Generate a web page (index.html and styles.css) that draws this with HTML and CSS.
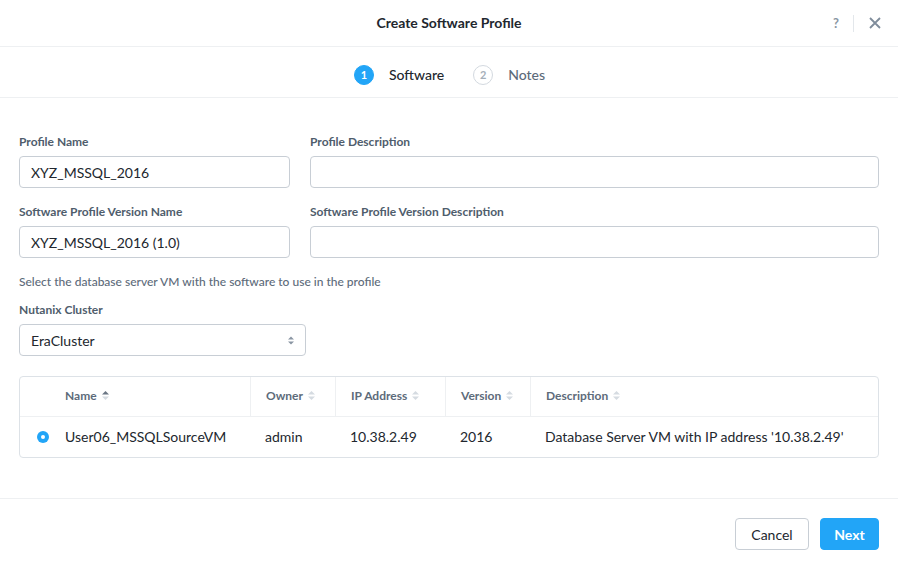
FILE: index.html
```html
<!DOCTYPE html>
<html>
<head>
<meta charset="utf-8">
<link rel="stylesheet" href="styles.css">
</head>
<body>
<div class="modal">
  <header class="head">
    <div class="title">Create Software Profile</div>
    <div class="head-actions">
      <span class="help">?</span>
      <span class="sep"></span>
      <svg class="close" width="12" height="12" viewBox="0 0 12 12"><path d="M1 1L11 11M11 1L1 11" stroke="#7f8c9b" stroke-width="1.8" fill="none"/></svg>
    </div>
  </header>
  <nav class="steps">
    <div class="step active"><span class="num">1</span><span class="step-label">Software</span></div>
    <div class="step"><span class="num">2</span><span class="step-label">Notes</span></div>
  </nav>
  <main class="body">
    <div class="grid">
      <div class="field">
        <label class="lbl">Profile Name</label>
        <div class="input">XYZ_MSSQL_2016</div>
      </div>
      <div class="field">
        <label class="lbl">Profile Description</label>
        <div class="input"></div>
      </div>
      <div class="field">
        <label class="lbl">Software Profile Version Name</label>
        <div class="input">XYZ_MSSQL_2016 (1.0)</div>
      </div>
      <div class="field">
        <label class="lbl">Software Profile Version Description</label>
        <div class="input"></div>
      </div>
    </div>
    <p class="hint">Select the database server VM with the software to use in the profile</p>
    <div class="field cluster">
      <label class="lbl">Nutanix Cluster</label>
      <div class="input select">EraCluster
        <svg class="updown" width="6" height="9" viewBox="0 0 6 9"><path d="M0 3.5L3 0.5L6 3.5Z M0 5.5L3 8.5L6 5.5Z" fill="#8a96a3"/></svg>
      </div>
    </div>
    <div class="table">
      <div class="tr th">
        <div class="c c0"></div>
        <div class="c c1">Name <svg class="sort" width="7" height="11" viewBox="0 0 7 11"><path d="M0 4.5L3.5 1L7 4.5Z" fill="#6b7785"/><path d="M0 6.5L3.5 10L7 6.5Z" fill="#d5dbe1"/></svg></div>
        <div class="c c2">Owner <svg class="sort" width="7" height="11" viewBox="0 0 7 11"><path d="M0 4.5L3.5 1L7 4.5Z" fill="#d5dbe1"/><path d="M0 6.5L3.5 10L7 6.5Z" fill="#d5dbe1"/></svg></div>
        <div class="c c3">IP Address <svg class="sort" width="7" height="11" viewBox="0 0 7 11"><path d="M0 4.5L3.5 1L7 4.5Z" fill="#d5dbe1"/><path d="M0 6.5L3.5 10L7 6.5Z" fill="#d5dbe1"/></svg></div>
        <div class="c c4">Version <svg class="sort" width="7" height="11" viewBox="0 0 7 11"><path d="M0 4.5L3.5 1L7 4.5Z" fill="#d5dbe1"/><path d="M0 6.5L3.5 10L7 6.5Z" fill="#d5dbe1"/></svg></div>
        <div class="c c5">Description <svg class="sort" width="7" height="11" viewBox="0 0 7 11"><path d="M0 4.5L3.5 1L7 4.5Z" fill="#d5dbe1"/><path d="M0 6.5L3.5 10L7 6.5Z" fill="#d5dbe1"/></svg></div>
      </div>
      <div class="tr td">
        <div class="c c0"><span class="radio"></span></div>
        <div class="c c1">User06_MSSQLSourceVM</div>
        <div class="c c2">admin</div>
        <div class="c c3">10.38.2.49</div>
        <div class="c c4">2016</div>
        <div class="c c5">Database Server VM with IP address '10.38.2.49'</div>
      </div>
    </div>
  </main>
  <footer class="foot">
    <button class="btn cancel">Cancel</button>
    <button class="btn next">Next</button>
  </footer>
</div>
</body>
</html>
```
FILE: styles.css
```css
* { box-sizing: border-box; }
html, body { margin: 0; padding: 0; background: #fff; }
body {
  font-family: Lato, "Open Sans", "Liberation Sans", sans-serif;
  color: #22272e;
  width: 898px;
  height: 568px;
  overflow: hidden;
}
.modal { display: flex; flex-direction: column; height: 568px; }
.head {
  height: 47px;
  border-bottom: 1px solid #eef0f2;
  display: flex;
  align-items: center;
  justify-content: center;
  position: relative;
  padding-bottom: 2px;
}
.title { font-size: 14px; font-weight: 700; color: #22272e; }
.head-actions {
  position: absolute;
  right: 17px;
  top: 14px;
  display: flex;
  align-items: center;
  height: 18px;
}
.help { font-size: 13px; color: #8a96a3; font-weight: 700; }
.sep { width: 1px; height: 17px; background: #e3e7eb; margin: 0 15px 0 14px; }
.close { display: block; }
.steps {
  height: 51px;
  border-bottom: 1px solid #eef0f2;
  display: flex;
  align-items: center;
  justify-content: center;
  gap: 29px;
  padding-left: 1px;
  padding-top: 5px;
}
.step { display: flex; align-items: center; }
.num {
  width: 20px; height: 20px;
  border-radius: 50%;
  border: 1px solid #d3d9df;
  color: #a5afb9;
  font-size: 11px;
  font-weight: 700;
  display: flex; align-items: center; justify-content: center;
  margin-right: 15px;
}
.step.active .num { background: #22a5f7; border-color: #22a5f7; color: #fff; }
.step-label { font-size: 14px; color: #5d6b7a; font-weight: 500; }
.step.active .step-label { color: #22272e; }
.body { flex: 1; padding: 37px 19px 0 19px; }
.grid {
  display: grid;
  grid-template-columns: 271px 569px;
  column-gap: 20px;
  row-gap: 17px;
}
.field { display: flex; flex-direction: column; }
.lbl { font-size: 12px; font-weight: 700; color: #4f5d6c; margin-bottom: 7px; line-height: 14px; }
.input {
  height: 32px;
  border: 1px solid #c8ced5;
  border-radius: 4px;
  font-size: 14px;
  color: #22272e;
  padding: 0 11px;
  display: flex;
  align-items: center;
}
.hint { margin: 17px 0 0 0; font-size: 12px; color: #5d6b7a; font-weight: 500; line-height: 14px; }
.cluster { margin-top: 14px; width: 287px; }
.select { justify-content: space-between; }
.table {
  margin-top: 20px;
  border: 1px solid #dde2e7;
  border-radius: 4px;
}
.tr { display: flex; }
.th { height: 40px; border-bottom: 1px solid #eef0f2; font-size: 12px; font-weight: 700; color: #5d6b7a; }
.th .c { padding-bottom: 3px; }
.td { height: 40px; font-size: 14px; color: #22272e; }
.td .c { padding-bottom: 1px; }
.c { display: flex; align-items: center; padding-left: 15px; }
.c0 { width: 30px; padding-left: 17px; }
.c1 { width: 200px; padding-left: 15px; }
.c2 { width: 85px; }
.c3 { width: 110px; }
.c4 { width: 85px; }
.c5 { flex: 1; }
.th .c2, .th .c3, .th .c4, .th .c5 { border-left: 1px solid #eef0f2; }
.sort { margin-left: 5px; }
.radio {
  width: 12px; height: 12px; border-radius: 50%;
  background: #22a5f7;
  display: flex; align-items: center; justify-content: center;
  flex: none;
}
.radio::after { content: ""; width: 4px; height: 4px; border-radius: 50%; background: #fff; }
.foot {
  height: 70px;
  border-top: 1px solid #eef0f2;
  display: flex;
  align-items: flex-start;
  justify-content: flex-end;
  padding: 19px 19px 0 0;
  gap: 11px;
}
.btn {
  height: 32px;
  font-family: inherit;
  font-size: 14px;
  border-radius: 4px;
  padding: 0;
  cursor: pointer;
}
.cancel { background: #fff; border: 1px solid #c8ced5; color: #22272e; width: 74px; }
.next { background: #22a5f7; border: 1px solid #22a5f7; color: #fff; font-weight: 700; width: 59px; }
```
